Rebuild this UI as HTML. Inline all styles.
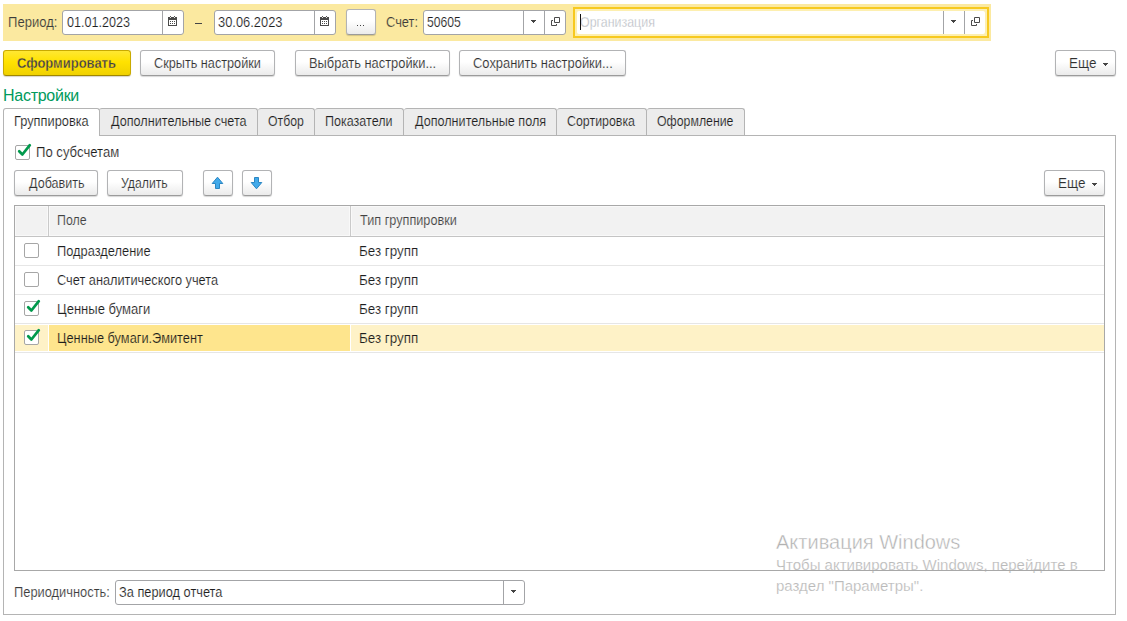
<!DOCTYPE html>
<html lang="ru">
<head>
<meta charset="utf-8">
<title>Настройки отчета</title>
<style>
html,body{margin:0;padding:0;background:#fff;}
body{width:1127px;height:621px;position:relative;overflow:hidden;font-family:"Liberation Sans",sans-serif;font-size:14px;color:#333;}
.abs{position:absolute;box-sizing:border-box;}
.t{position:absolute;white-space:nowrap;line-height:16px;z-index:5;transform-origin:0 0;}
.band{left:3px;top:4px;width:988px;height:37px;background:#fbe9a0;}
.inp{position:absolute;box-sizing:border-box;height:25px;background:#fff;border:1px solid #a3a4a7;border-radius:3px;}
.sep{position:absolute;width:1px;background:#a3a4a7;}
.btn{position:absolute;box-sizing:border-box;height:26px;border:1px solid #b2b3b5;border-bottom-color:#9b9b9b;border-radius:3px;background:linear-gradient(#ffffff 0%,#ffffff 45%,#ebebeb 100%);box-shadow:0 1px 1px rgba(0,0,0,0.16);}
.btn.y{background:linear-gradient(#ffe733 0%,#ffe200 45%,#f0d100 100%);border-color:#c9aa00;border-bottom-color:#9f8700;box-shadow:0 1px 1px rgba(80,60,0,0.22);}
.tri{position:absolute;width:5px;height:3px;background:linear-gradient(#444,#444) 0 0/5px 1px no-repeat,linear-gradient(#444,#444) 1px 1px/3px 1px no-repeat,linear-gradient(#444,#444) 2px 2px/1px 1px no-repeat;}
.tab{position:absolute;box-sizing:border-box;top:108px;height:27px;border:1px solid #b4b4b4;border-bottom:none;border-left:none;background:#ececec;border-radius:3px 3px 0 0;}
.tab.act{top:108px;height:28px;background:#fff;border-left:1px solid #b4b4b4;z-index:3;}
.panel{left:3px;top:135px;width:1113px;height:480px;border:1px solid #b4b4b4;}
.cb{width:15px;height:15px;border:1px solid #a6a6a6;border-radius:2px;background:#fff;}
.tbl{left:14px;top:205px;width:1091px;height:366px;border:1px solid #a8a8a8;background:#fff;}
.hd{position:absolute;top:206px;height:30px;background:#f2f2f2;box-sizing:border-box;border:1px solid #f9f9f9;}
.hl{position:absolute;left:15px;width:1089px;height:1px;}
.wm{position:absolute;white-space:nowrap;color:#c6c6c6;transform-origin:0 0;}
</style>
</head>
<body>

<!-- top yellow band -->
<div class="abs band"></div>
<div class="inp" style="left:62px;top:10px;width:122px;"></div>
<div class="sep" style="left:162px;top:11px;height:23px;"></div>
<svg class="abs" style="left:168px;top:16px;" width="9" height="11" viewBox="0 0 9 11" shape-rendering="crispEdges"><rect x="0" y="1" width="9" height="9" fill="#4a4a4a"/><rect x="1" y="4" width="7" height="5" fill="#fff"/><rect x="2" y="0" width="1" height="1" fill="#555"/><rect x="6" y="0" width="1" height="1" fill="#555"/><rect x="2" y="1" width="1" height="1" fill="#e8e8e8"/><rect x="6" y="1" width="1" height="1" fill="#e8e8e8"/><rect x="2" y="5" width="1" height="1" fill="#4a4a4a"/><rect x="4" y="5" width="1" height="1" fill="#4a4a4a"/><rect x="6" y="5" width="1" height="1" fill="#4a4a4a"/><rect x="2" y="7" width="1" height="1" fill="#4a4a4a"/><rect x="4" y="7" width="1" height="1" fill="#4a4a4a"/><rect x="6" y="7" width="1" height="1" fill="#4a4a4a"/></svg>
<div class="abs" style="left:195px;top:23px;width:7px;height:1px;background:#444;"></div>
<div class="inp" style="left:214px;top:10px;width:122px;"></div>
<div class="sep" style="left:314px;top:11px;height:23px;"></div>
<svg class="abs" style="left:320px;top:16px;" width="9" height="11" viewBox="0 0 9 11" shape-rendering="crispEdges"><rect x="0" y="1" width="9" height="9" fill="#4a4a4a"/><rect x="1" y="4" width="7" height="5" fill="#fff"/><rect x="2" y="0" width="1" height="1" fill="#555"/><rect x="6" y="0" width="1" height="1" fill="#555"/><rect x="2" y="1" width="1" height="1" fill="#e8e8e8"/><rect x="6" y="1" width="1" height="1" fill="#e8e8e8"/><rect x="2" y="5" width="1" height="1" fill="#4a4a4a"/><rect x="4" y="5" width="1" height="1" fill="#4a4a4a"/><rect x="6" y="5" width="1" height="1" fill="#4a4a4a"/><rect x="2" y="7" width="1" height="1" fill="#4a4a4a"/><rect x="4" y="7" width="1" height="1" fill="#4a4a4a"/><rect x="6" y="7" width="1" height="1" fill="#4a4a4a"/></svg>
<div class="btn" style="left:346px;top:9px;width:30px;"></div>
<div class="abs" style="left:357px;top:25px;width:1px;height:1px;background:#444;z-index:5;"></div>
<div class="abs" style="left:360px;top:25px;width:1px;height:1px;background:#444;z-index:5;"></div>
<div class="abs" style="left:363px;top:25px;width:1px;height:1px;background:#444;z-index:5;"></div>
<div class="inp" style="left:423px;top:10px;width:143px;"></div>
<div class="sep" style="left:523px;top:11px;height:23px;"></div>
<div class="tri" style="left:531px;top:20px;"></div>
<div class="sep" style="left:544px;top:11px;height:23px;"></div>
<svg class="abs" style="left:551px;top:17px;" width="10" height="10" viewBox="0 0 10 10"><path d="M3.5 0.5h5v5h-5z M2 3.5H0.5V8.5H5.5V7" fill="none" stroke="#4a4a4a" stroke-width="1"/></svg>

<!-- focused organisation field -->
<div class="abs" style="left:573px;top:7px;width:416px;height:31px;border:2px solid #f7c91f;background:#fdefb0;"></div>
<div class="abs" style="left:577px;top:11px;width:408px;height:23px;background:#fff;border-radius:2px;"></div>
<div class="abs" style="left:580px;top:14px;width:1px;height:16px;background:#111;z-index:6;"></div>
<div class="sep" style="left:943px;top:11px;height:23px;"></div>
<div class="tri" style="left:951px;top:20px;"></div>
<div class="sep" style="left:964px;top:11px;height:23px;"></div>
<svg class="abs" style="left:971px;top:17px;" width="10" height="10" viewBox="0 0 10 10"><path d="M3.5 0.5h5v5h-5z M2 3.5H0.5V8.5H5.5V7" fill="none" stroke="#4a4a4a" stroke-width="1"/></svg>

<!-- command bar -->
<div class="btn y" style="left:3px;top:50px;width:128px;"></div>
<div class="btn" style="left:140px;top:50px;width:135px;"></div>
<div class="btn" style="left:295px;top:50px;width:155px;"></div>
<div class="btn" style="left:459px;top:50px;width:167px;"></div>
<div class="btn" style="left:1055px;top:50px;width:61px;"></div>
<div class="tri" style="left:1103px;top:63px;"></div>

<!-- title -->
<div class="abs" style="left:3px;top:86px;font-size:16px;line-height:19px;letter-spacing:-0.27px;color:#009a5c;white-space:nowrap;">Настройки</div>

<!-- tabs -->
<div class="tab act" style="left:3px;width:97px;"></div>
<div class="tab" style="left:99px;width:159px;"></div>
<div class="tab" style="left:258px;width:57px;"></div>
<div class="tab" style="left:315px;width:89px;"></div>
<div class="tab" style="left:404px;width:153px;"></div>
<div class="tab" style="left:557px;width:90px;"></div>
<div class="tab" style="left:647px;width:98px;"></div>
<div class="abs panel"></div>

<!-- subaccount checkbox -->
<div class="abs cb" style="left:15px;top:145px;"></div><svg class="abs" style="left:14px;top:142px;" width="18" height="18" viewBox="0 0 18 18"><path d="M5.2 9.2 L8.4 12.5 L15.8 3.2" fill="none" stroke="#00994c" stroke-width="2.7" stroke-linecap="round" stroke-linejoin="round"/></svg>

<!-- table command bar -->
<div class="btn" style="left:14px;top:170px;width:84px;"></div>
<div class="btn" style="left:107px;top:170px;width:76px;"></div>
<div class="btn" style="left:203px;top:170px;width:30px;"></div>
<svg class="abs" style="left:211px;top:176px;z-index:5;" width="14" height="14" viewBox="0 0 14 14"><path d="M6.5 1.2 L11.8 7.5 H8.5 V12.5 H4.5 V7.5 H1.2 Z" fill="#42aaea" stroke="#2b86c3" stroke-width="1"/></svg>
<div class="btn" style="left:242px;top:170px;width:30px;"></div>
<svg class="abs" style="left:250px;top:176px;z-index:5;" width="14" height="14" viewBox="0 0 14 14"><path d="M6.5 12.8 L11.8 6.5 H8.5 V1.5 H4.5 V6.5 H1.2 Z" fill="#42aaea" stroke="#2b86c3" stroke-width="1"/></svg>
<div class="btn" style="left:1044px;top:170px;width:61px;"></div>
<div class="tri" style="left:1092px;top:183px;"></div>

<!-- table -->
<div class="abs tbl"></div>
<div class="hd" style="left:15px;width:33px;"></div>
<div class="hd" style="left:49px;width:301px;"></div>
<div class="hd" style="left:351px;width:753px;"></div>
<div class="abs" style="left:48px;top:206px;width:1px;height:30px;background:#cacaca;"></div>
<div class="abs" style="left:350px;top:206px;width:1px;height:30px;background:#cacaca;"></div>
<div class="hl" style="top:236px;background:#c4c4c4;"></div>
<div class="hl" style="top:265px;background:#e6e6e6;"></div>
<div class="hl" style="top:294px;background:#e6e6e6;"></div>
<div class="hl" style="top:323px;background:#e6e6e6;"></div>
<div class="abs" style="left:15px;top:325px;width:33px;height:26px;background:#fef2c7;"></div>
<div class="abs" style="left:49px;top:325px;width:301px;height:26px;background:#fee58d;"></div>
<div class="abs" style="left:351px;top:325px;width:753px;height:26px;background:#fef2c7;"></div>
<div class="hl" style="top:352px;background:#e6e6e6;"></div>
<div class="abs cb" style="left:24px;top:243px;"></div>
<div class="abs cb" style="left:24px;top:272px;"></div>
<div class="abs cb" style="left:24px;top:301px;"></div><svg class="abs" style="left:23px;top:298px;" width="18" height="18" viewBox="0 0 18 18"><path d="M5.2 9.2 L8.4 12.5 L15.8 3.2" fill="none" stroke="#00994c" stroke-width="2.7" stroke-linecap="round" stroke-linejoin="round"/></svg>
<div class="abs cb" style="left:24px;top:330px;"></div><svg class="abs" style="left:23px;top:327px;" width="18" height="18" viewBox="0 0 18 18"><path d="M5.2 9.2 L8.4 12.5 L15.8 3.2" fill="none" stroke="#00994c" stroke-width="2.7" stroke-linecap="round" stroke-linejoin="round"/></svg>

<!-- periodicity -->
<div class="inp" style="left:115px;top:580px;width:410px;"></div>
<div class="sep" style="left:503px;top:581px;height:23px;"></div>
<div class="tri" style="left:511px;top:590px;"></div>

<!-- text -->
<div class="t" style="left:7.90px;top:14px;transform:scaleX(0.9320);color:#3c3c3c;-webkit-text-stroke:0.15px #fbe9a0;">Период:</div>
<div class="t" style="left:67.14px;top:14px;transform:scaleX(0.8994);color:#1e1e1e;-webkit-text-stroke:0.15px #fff;">01.01.2023</div>
<div class="t" style="left:217.98px;top:14px;transform:scaleX(0.9199);color:#1e1e1e;-webkit-text-stroke:0.15px #fff;">30.06.2023</div>
<div class="t" style="left:385.90px;top:14px;transform:scaleX(0.9188);color:#3c3c3c;-webkit-text-stroke:0.15px #fbe9a0;">Счет:</div>
<div class="t" style="left:427.48px;top:14px;transform:scaleX(0.8694);color:#1e1e1e;-webkit-text-stroke:0.15px #fff;">50605</div>
<div class="t" style="left:580.48px;top:14px;transform:scaleX(0.8870);color:#b3b7be;-webkit-text-stroke:0.3px #fff;">Организация</div>
<div class="t" style="left:17.20px;top:55px;transform:scaleX(0.9280);color:#3e4046;-webkit-text-stroke:0.3px #fadd18;font-weight:bold;">Сформировать</div>
<div class="t" style="left:153.62px;top:55px;transform:scaleX(0.9061);color:#303030;-webkit-text-stroke:0.15px #f9f9f9;">Скрыть настройки</div>
<div class="t" style="left:308.90px;top:55px;transform:scaleX(0.9202);color:#303030;-webkit-text-stroke:0.15px #f9f9f9;">Выбрать настройки...</div>
<div class="t" style="left:473.34px;top:55px;transform:scaleX(0.9232);color:#303030;-webkit-text-stroke:0.15px #f9f9f9;">Сохранить настройки...</div>
<div class="t" style="left:1069.26px;top:55px;transform:scaleX(0.9642);color:#303030;-webkit-text-stroke:0.15px #f9f9f9;">Еще</div>
<div class="t" style="left:13.76px;top:113px;transform:scaleX(0.9154);color:#1e1e1e;-webkit-text-stroke:0.15px #fff;">Группировка</div>
<div class="t" style="left:110.56px;top:113px;transform:scaleX(0.9030);color:#1e1e1e;-webkit-text-stroke:0.15px #ececec;">Дополнительные счета</div>
<div class="t" style="left:268.14px;top:113px;transform:scaleX(0.8748);color:#1e1e1e;-webkit-text-stroke:0.15px #ececec;">Отбор</div>
<div class="t" style="left:325.48px;top:113px;transform:scaleX(0.8967);color:#1e1e1e;-webkit-text-stroke:0.15px #ececec;">Показатели</div>
<div class="t" style="left:414.78px;top:113px;transform:scaleX(0.9009);color:#1e1e1e;-webkit-text-stroke:0.15px #ececec;">Дополнительные поля</div>
<div class="t" style="left:566.90px;top:113px;transform:scaleX(0.8852);color:#1e1e1e;-webkit-text-stroke:0.15px #ececec;">Сортировка</div>
<div class="t" style="left:656.56px;top:113px;transform:scaleX(0.8800);color:#1e1e1e;-webkit-text-stroke:0.15px #ececec;">Оформление</div>
<div class="t" style="left:36.12px;top:144px;transform:scaleX(0.9366);color:#1e1e1e;-webkit-text-stroke:0.15px #fff;">По субсчетам</div>
<div class="t" style="left:28.50px;top:175px;transform:scaleX(0.8977);color:#303030;-webkit-text-stroke:0.15px #f9f9f9;">Добавить</div>
<div class="t" style="left:121.20px;top:175px;transform:scaleX(0.8746);color:#303030;-webkit-text-stroke:0.15px #f9f9f9;">Удалить</div>
<div class="t" style="left:1058.12px;top:175px;transform:scaleX(0.9642);color:#303030;-webkit-text-stroke:0.15px #f9f9f9;">Еще</div>
<div class="t" style="left:57.12px;top:212px;transform:scaleX(0.8834);color:#424242;-webkit-text-stroke:0.15px #f2f2f2;">Поле</div>
<div class="t" style="left:360.14px;top:212px;transform:scaleX(0.9054);color:#424242;-webkit-text-stroke:0.15px #f2f2f2;">Тип группировки</div>
<div class="t" style="left:57.12px;top:243px;transform:scaleX(0.9168);color:#1e1e1e;-webkit-text-stroke:0.15px #fff;">Подразделение</div>
<div class="t" style="left:57.12px;top:272px;transform:scaleX(0.9115);color:#1e1e1e;-webkit-text-stroke:0.15px #fff;">Счет аналитического учета</div>
<div class="t" style="left:57.12px;top:301px;transform:scaleX(0.9311);color:#1e1e1e;-webkit-text-stroke:0.15px #fff;">Ценные бумаги</div>
<div class="t" style="left:57.12px;top:330px;transform:scaleX(0.9135);color:#1e1e1e;-webkit-text-stroke:0.15px #fee58d;">Ценные бумаги.Эмитент</div>
<div class="t" style="left:359.34px;top:243px;transform:scaleX(0.9584);color:#1e1e1e;-webkit-text-stroke:0.15px #fff;">Без групп</div>
<div class="t" style="left:359.34px;top:272px;transform:scaleX(0.9584);color:#1e1e1e;-webkit-text-stroke:0.15px #fff;">Без групп</div>
<div class="t" style="left:359.34px;top:301px;transform:scaleX(0.9584);color:#1e1e1e;-webkit-text-stroke:0.15px #fff;">Без групп</div>
<div class="t" style="left:359.34px;top:330px;transform:scaleX(0.9584);color:#1e1e1e;-webkit-text-stroke:0.15px #fef2c7;">Без групп</div>
<div class="t" style="left:14.40px;top:584px;transform:scaleX(0.9185);color:#3c3c3c;-webkit-text-stroke:0.15px #fff;">Периодичность:</div>
<div class="t" style="left:119.48px;top:584px;transform:scaleX(0.9138);color:#1e1e1e;-webkit-text-stroke:0.15px #fff;">За период отчета</div>

<!-- windows activation watermark -->
<div class="wm" style="left:776px;top:530px;font-size:20px;line-height:24px;-webkit-text-stroke:0.4px #fff;color:#b2b2b2;">Активация Windows</div>
<div class="wm" style="left:776px;top:556px;font-size:15px;line-height:18px;-webkit-text-stroke:0.2px #fff;color:#bababa;">Чтобы активировать Windows, перейдите в</div>
<div class="wm" style="left:776px;top:577px;font-size:15px;line-height:18px;-webkit-text-stroke:0.2px #fff;color:#bababa;">раздел "Параметры".</div>
<div class="abs" style="left:770px;top:570px;width:335px;height:1px;background:#a8a8a8;z-index:8;"></div>

</body>
</html>
